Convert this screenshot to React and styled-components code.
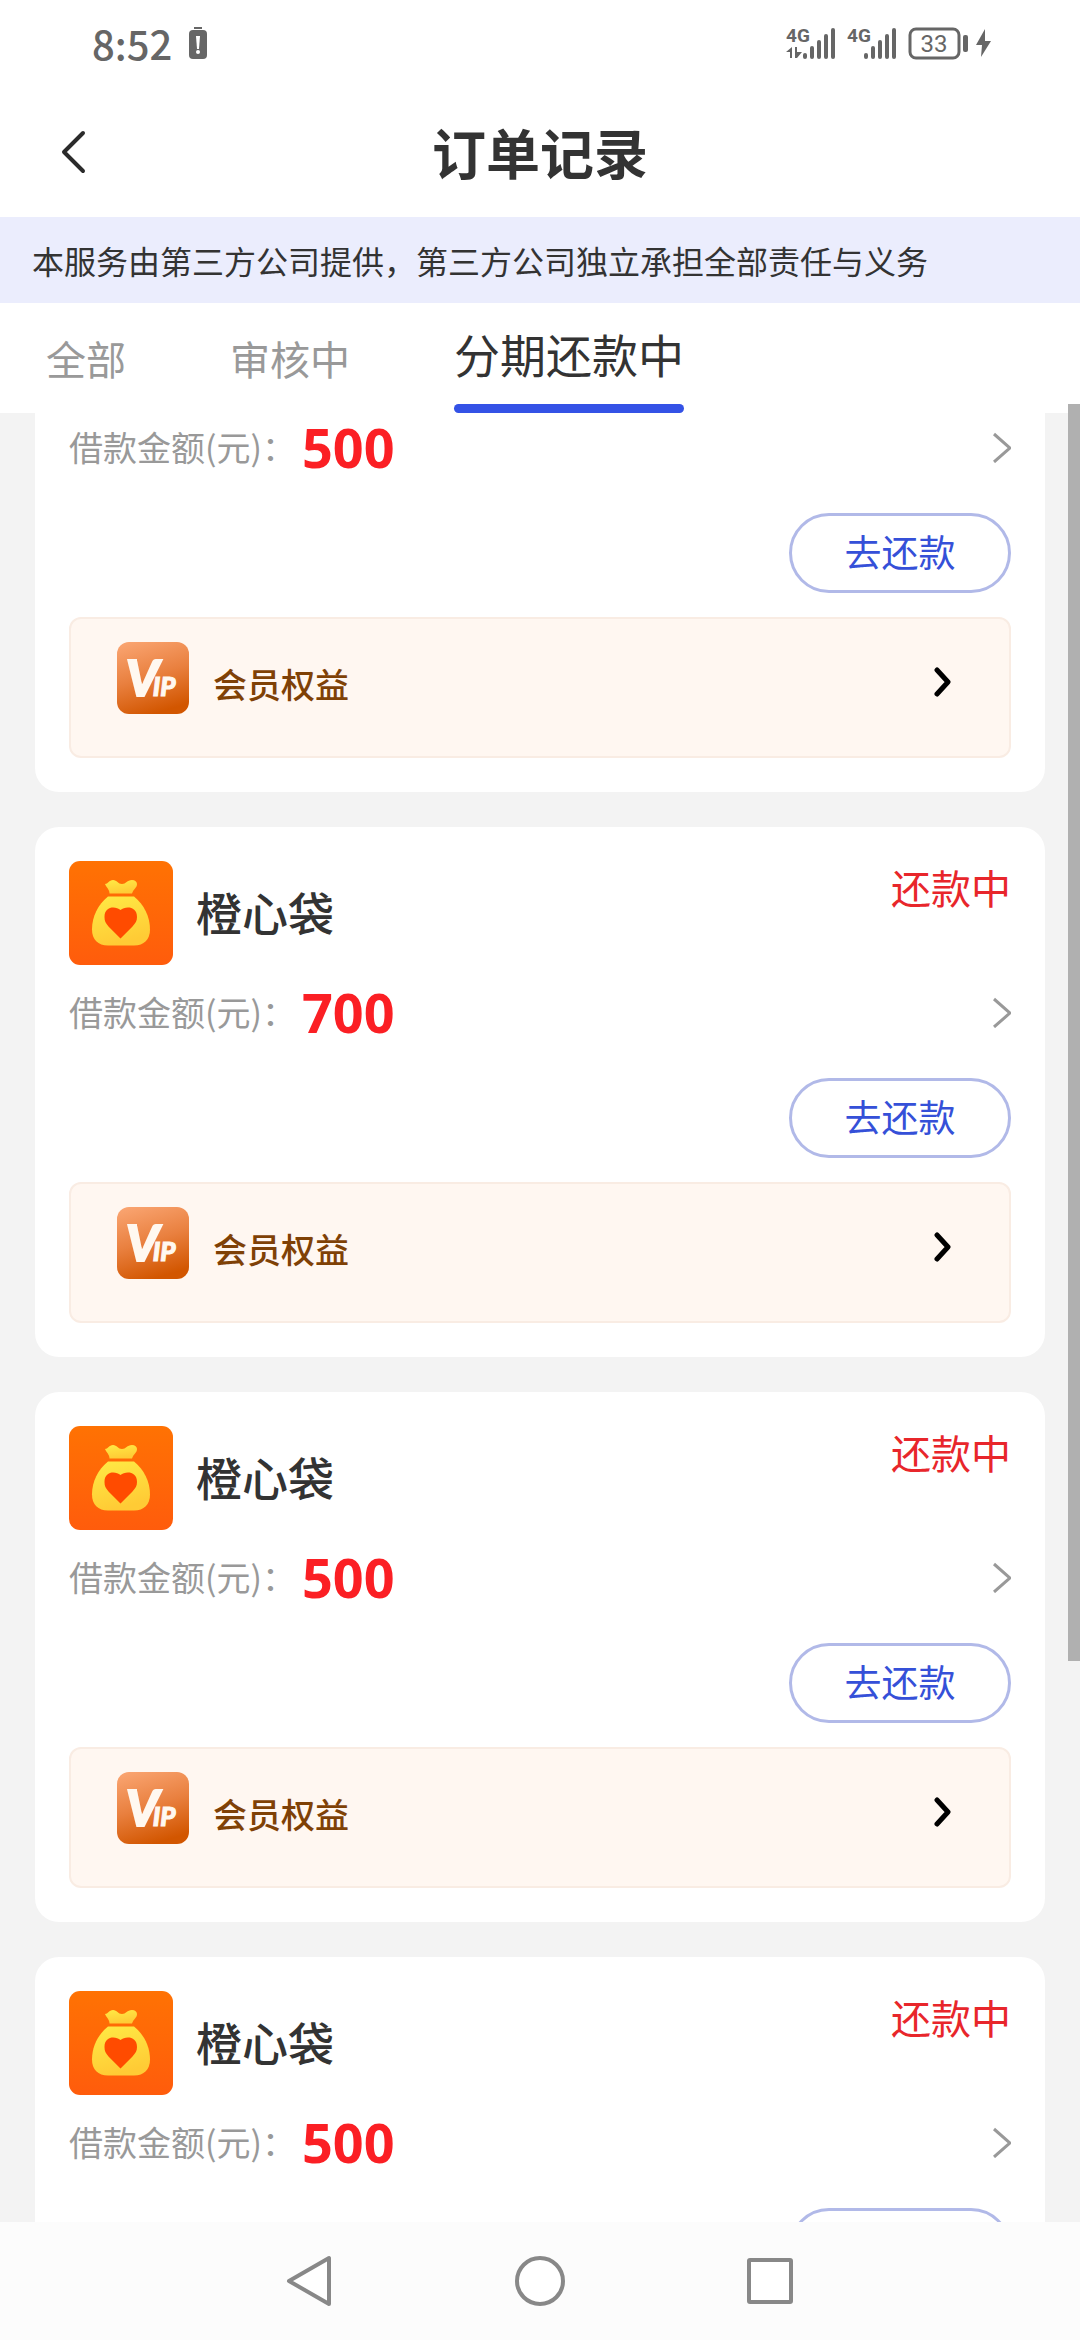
import React, { useLayoutEffect, useRef } from "react";
import styled, { createGlobalStyle } from "styled-components";

const tabs = ["全部", "审核中", "分期还款中"];

const orders = [
    { id: 1, name: "橙心袋", amount: 500, status: "还款中" },
    { id: 2, name: "橙心袋", amount: 700, status: "还款中" },
    { id: 3, name: "橙心袋", amount: 500, status: "还款中" },
    { id: 4, name: "橙心袋", amount: 500, status: "还款中" },
];

const Signal = ({ data }) => (
    <svg width="50" height="34" viewBox="0 0 50 34" fill="#666">
        <text x="0" y="16" fontSize="19" fontWeight="700" fontFamily="Liberation Sans Narrow, Roboto, sans-serif">4G</text>
        {data && (
            <path d="M6 21v11H4v-6H0zM9 21h2v5h5l-5 6H9z" />
        )}
        <rect x="17" y="27" width="4" height="6" rx="2" />
        <rect x="24" y="20" width="4" height="13" rx="2" />
        <rect x="31" y="14" width="4" height="19" rx="2" />
        <rect x="38" y="8" width="4" height="25" rx="2" />
        <rect x="45" y="2" width="4" height="31" rx="2" />
    </svg>
);

const BatteryAlert = () => (
    <svg width="18" height="34" viewBox="0 0 18 34">
        <rect x="5" y="1" width="8" height="2" fill="#666" />
        <rect y="4" width="18" height="29" rx="4" fill="#666" />
        <path d="M7 10h4l-1 13H8z" fill="#fff" />
        <circle cx="9" cy="26" r="2" fill="#fff" />
    </svg>
);

const BagLogo = () => (
    <svg width="104" height="104" viewBox="0 0 104 104">
        <defs>
            <linearGradient id="bagBg" x1="0" y1="0" x2="0" y2="1">
                <stop offset="0" stopColor="#ff7203" />
                <stop offset="1" stopColor="#ff5c0c" />
            </linearGradient>
            <linearGradient id="bagFill" x1="0" y1="0" x2="0.3" y2="1">
                <stop offset="0" stopColor="#ffea45" />
                <stop offset="1" stopColor="#ffcb35" />
            </linearGradient>
        </defs>
        <rect width="104" height="104" rx="11" fill="url(#bagBg)" />
        <path
            fill="url(#bagFill)"
            d="M36 23c3 0 4-4 8-4s5 4 9 4 5-4 10-4c3 0 5 2 5 4 0 4-3 4-5 9.500H40.500c0-4-3-6-4.500-9.500z"
        />
        <path
            fill="url(#bagFill)"
            d="M39 35.500h26c10 8 16 20 16 33 0 10-6 16-16 16H39c-10 0-16-6-16-16 0-13 6-25 16-33z"
        />
        <path
            fill="#ff4b00"
            d="M51.500 49c-5-4-16-4-16 7 0 4 1 6 4 9.500l12 12 12-12c3-3.500 4.500-5.500 4.500-9.500 0-11-11.500-11-16.500-7z"
        />
    </svg>
);

const VipLogo = () => (
    <svg width="72" height="72" viewBox="0 0 72 72">
        <defs>
            <linearGradient id="vipBg" x1="0.200" y1="0" x2="0.500" y2="1">
                <stop offset="0" stopColor="#f9a36f" />
                <stop offset="0.500" stopColor="#e9803f" />
                <stop offset="1" stopColor="#d25600" />
            </linearGradient>
        </defs>
        <rect width="72" height="72" rx="12" fill="url(#vipBg)" />
        <text x="9" y="54" fontSize="50" fill="#fff8f0" stroke="#fff8f0" strokeWidth="2" fontFamily="Lato, sans-serif" fontWeight="900" fontStyle="italic">
            V<tspan dx="-6" fontSize="26" strokeWidth="1">IP</tspan>
        </text>
        <path d="M11 17h9v4h-7z" fill="#fff8f0" />
    </svg>
);

const Order = ({ order }) => (
    <Card>
        <CardHead>
            <BagLogo />
            <Name>{order.name}</Name>
            <Status>{order.status}</Status>
        </CardHead>
        <AmountRow href="#detail">
            <Label>借款金额(元)：</Label>
            <Amount>{order.amount}</Amount>
            <svg width="20" height="32" viewBox="0 0 20 32" fill="none" stroke="#999" strokeWidth="3">
                <path d="M3 3l16 14L3 31" />
            </svg>
        </AmountRow>
        <PayButton type="button">去还款</PayButton>
        <VipRow href="#vip">
            <VipLogo />
            <VipText>会员权益</VipText>
            <VipArrow viewBox="0 0 18 80">
                <path d="M4 28l11 12L4 52" />
            </VipArrow>
        </VipRow>
    </Card>
);

const App = () => {
    const listRef = useRef(null);

    // 恢复上次的滚动位置
    useLayoutEffect(() => {
        listRef.current.scrollTop = 186;
    }, []);

    return (
        <>
            <GlobalStyle />
            <Page>
                <StatusBar>
                    <Time>8:52</Time>
                    <BatteryAlert />
                    <StatusRight>
                        <Signal data />
                        <Signal />
                        <svg width="84" height="34" viewBox="0 0 84 34" fill="#666">
                            <rect x="2" y="3" width="49" height="29" rx="6" fill="none" stroke="#666" strokeWidth="3" />
                            <text x="26" y="26" fontSize="24" textAnchor="middle" fontFamily="Roboto, sans-serif">33</text>
                            <rect x="55" y="9" width="5" height="17" rx="2" />
                            <path d="M77 3L68 19h6l-1 12 10-16h-6z" />
                        </svg>
                    </StatusRight>
                </StatusBar>

                <Header>
                    <BackButton type="button" aria-label="返回">
                        <svg width="28" height="44" viewBox="0 0 28 44" fill="none" stroke="#2b2b2b" strokeWidth="4" strokeLinecap="round" strokeLinejoin="round">
                            <path d="M23 3L4 22l19 19" />
                        </svg>
                    </BackButton>
                    <Title>订单记录</Title>
                </Header>

                <Notice>本服务由第三方公司提供，第三方公司独立承担全部责任与义务</Notice>

                <Tabs>
                    {tabs.map((tab, i) => (
                        <Tab key={tab} type="button" $active={i === 2}>{tab}</Tab>
                    ))}
                </Tabs>

                <ListWrap>
                    <List ref={listRef}>
                        {orders.map((order) => (
                            <Order key={order.id} order={order} />
                        ))}
                    </List>
                    <ScrollThumb />
                </ListWrap>

                <NavBar>
                    <NavButton type="button" aria-label="后退">
                        <svg width="50" height="54" viewBox="0 0 50 54">
                            <path d="M44 4v46L4 27z" />
                        </svg>
                    </NavButton>
                    <NavButton type="button" aria-label="主页">
                        <svg width="50" height="54" viewBox="0 0 50 54">
                            <circle cx="25" cy="27" r="23" />
                        </svg>
                    </NavButton>
                    <NavButton type="button" aria-label="最近任务">
                        <svg width="50" height="54" viewBox="0 0 50 54">
                            <rect x="4" y="6" width="42" height="42" rx="1" />
                        </svg>
                    </NavButton>
                </NavBar>
            </Page>
        </>
    );
};

export default App;

const GlobalStyle = createGlobalStyle`
    * {
        box-sizing: border-box;
    }
    body {
        margin: 0;
        font-family: "Noto Sans CJK SC", sans-serif;
        color: #333;
        background: #fff;
    }
    button {
        padding: 0;
        border: none;
        background: none;
        font-family: inherit;
        cursor: pointer;
    }
    a {
        color: inherit;
        text-decoration: none;
    }
    svg {
        display: block;
        flex-shrink: 0;
    }
`

const Page = styled.div`
    display: flex;
    flex-direction: column;
    height: 100vh;
`

// 手机状态栏
const StatusBar = styled.div`
    display: flex;
    align-items: center;
    gap: 17px;
    height: 86px;
    padding: 0 88px 0 92px;
    flex-shrink: 0;
`

const Time = styled.span`
    font-size: 40px;
    line-height: 50px;
    font-weight: 500;
    color: #666;
`

const StatusRight = styled.div`
    display: flex;
    align-items: center;
    gap: 11px;
    margin-left: auto;
`

const Header = styled.header`
    display: grid;
    grid-template-columns: 100px 1fr 100px;
    align-items: center;
    height: 131px;
    flex-shrink: 0;
`

const BackButton = styled.button`
    padding-left: 60px;
`

const Title = styled.h1`
    margin: 0;
    font-size: 54px;
    line-height: 80px;
    font-weight: 700;
    text-align: center;
`

const Notice = styled.p`
    margin: 0;
    padding: 0 32px;
    font-size: 32px;
    line-height: 86px;
    background: #ebedfd;
    flex-shrink: 0;
`

const Tabs = styled.nav`
    display: flex;
    gap: 104px;
    padding: 0 46px;
    flex-shrink: 0;
`

const Tab = styled.button`
    font-size: ${({ $active }) => ($active ? "46px" : "40px")};
    line-height: ${({ $active }) => ($active ? "101px" : "110px")};
    color: ${({ $active }) => ($active ? "#333" : "#999")};

    &::after {
        content: "";
        display: ${({ $active }) => ($active ? "block" : "none")};
        height: 9px;
        border-radius: 5px;
        background: #3452e6;
    }
`

const ListWrap = styled.div`
    position: relative;
    flex: 1;
    min-height: 0;
    background: #f3f3f3;
`

const List = styled.main`
    display: flex;
    flex-direction: column;
    gap: 35px;
    height: 100%;
    padding: 35px;
    overflow-y: auto;
    scrollbar-width: none;
`

const ScrollThumb = styled.div`
    position: absolute;
    top: -9px;
    right: 0;
    bottom: 31%;
    width: 12px;
    background: #b0b0b0;
`

// 订单卡片
const Card = styled.article`
    display: flex;
    flex-direction: column;
    flex-shrink: 0;
    padding: 34px;
    border-radius: 24px;
    background: #fff;
`

const CardHead = styled.div`
    display: flex;
    align-items: center;
    gap: 23px;
`

const Name = styled.h2`
    margin: 0;
    padding-bottom: 4px;
    font-size: 46px;
    line-height: 60px;
    font-weight: 500;
`

const Status = styled.span`
    align-self: flex-start;
    margin-left: auto;
    font-size: 40px;
    line-height: 52px;
    color: #e8262b;
`

const AmountRow = styled.a`
    display: flex;
    align-items: center;
    gap: 6px;
    height: 94px;

    svg {
        margin-left: auto;
    }
`

const Label = styled.span`
    font-size: 34px;
    line-height: 60px;
    color: #999;
`

const Amount = styled.strong`
    font-family: "Noto Sans", sans-serif;
    font-size: 54px;
    line-height: 60px;
    font-weight: 700;
    color: #fb1f24;
`

const PayButton = styled.button`
    align-self: flex-end;
    width: 222px;
    height: 80px;
    margin: 19px 0 24px;
    padding-bottom: 4px;
    border: 3px solid #b1b9e8;
    border-radius: 40px;
    font-size: 37px;
    line-height: 60px;
    color: #3550d8;
`

const VipRow = styled.a`
    display: flex;
    gap: 24px;
    padding: 23px 58px 34px 46px;
    border: 2px solid #f9ece3;
    border-radius: 12px;
    background: #fff7f1;
`

const VipText = styled.span`
    padding-top: 12px;
    font-size: 34px;
    line-height: 60px;
    font-weight: 500;
    color: #7f4106;
`

const VipArrow = styled.svg`
    width: 18px;
    height: 80px;
    margin-left: auto;
    fill: none;
    stroke: #000;
    stroke-width: 5;
    stroke-linecap: round;
    stroke-linejoin: round;
`

// 系统导航栏
const NavBar = styled.footer`
    display: flex;
    justify-content: center;
    align-items: center;
    gap: 180px;
    height: 118px;
    background: #fcfcfc;
    flex-shrink: 0;
`

const NavButton = styled.button`
    svg {
        fill: #fff;
        stroke: #888;
        stroke-width: 4;
        stroke-linejoin: round;
    }
`
